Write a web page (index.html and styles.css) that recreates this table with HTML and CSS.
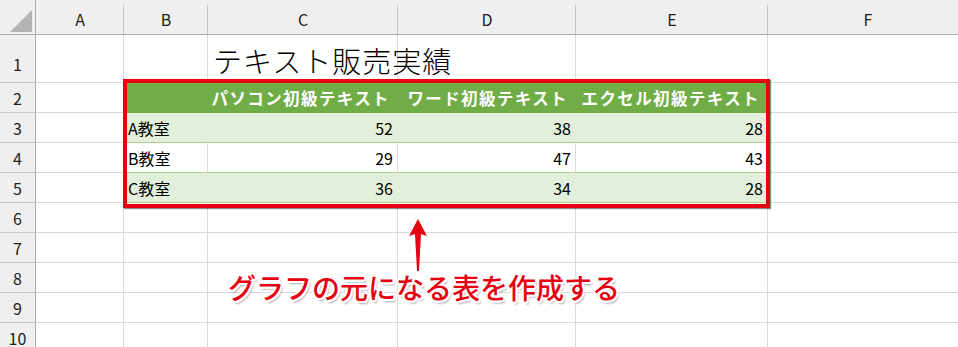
FILE: index.html
```html
<!DOCTYPE html>
<html lang="ja">
<head>
  <meta charset="UTF-8" />
  <title>テキスト販売実績</title>
  <link rel="stylesheet" href="styles.css">
</head>
<body>

<div class="sheet">
  <div class="grid">
    <!-- column headers -->
    <div class="corner"><span class="corner-mark"></span></div>
    <div class="hd">A</div>
    <div class="hd">B</div>
    <div class="hd">C</div>
    <div class="hd">D</div>
    <div class="hd">E</div>
    <div class="hd">F</div>

    <!-- row 1 : title -->
    <div class="rn rn-tall">1</div>
    <div class="cell tall"></div>
    <div class="cell tall"></div>
    <div class="cell tall title-cell"><span class="title">テキスト販売実績</span></div>
    <div class="cell tall"></div>
    <div class="cell tall"></div>
    <div class="cell tall"></div>

    <!-- row 2 : table head -->
    <div class="rn">2</div>
    <div class="cell"></div>
    <div class="cell th"></div>
    <div class="cell th">パソコン初級テキスト</div>
    <div class="cell th">ワード初級テキスト</div>
    <div class="cell th">エクセル初級テキスト</div>
    <div class="cell"></div>

    <!-- rows 3-5 : data -->
    <div class="rn">3</div>
    <div class="cell"></div>
    <div class="cell td band">A教室</div>
    <div class="cell td band num">52</div>
    <div class="cell td band num">38</div>
    <div class="cell td band num">28</div>
    <div class="cell"></div>

    <div class="rn">4</div>
    <div class="cell"></div>
    <div class="cell td">B教室</div>
    <div class="cell td num">29</div>
    <div class="cell td num">47</div>
    <div class="cell td num">43</div>
    <div class="cell"></div>

    <div class="rn">5</div>
    <div class="cell"></div>
    <div class="cell td band">C教室</div>
    <div class="cell td band num">36</div>
    <div class="cell td band num">34</div>
    <div class="cell td band num">28</div>
    <div class="cell"></div>

    <!-- empty rows -->
    <div class="rn">6</div>
    <div class="cell"></div><div class="cell"></div><div class="cell"></div><div class="cell"></div><div class="cell"></div><div class="cell"></div>
    <div class="rn">7</div>
    <div class="cell"></div><div class="cell"></div><div class="cell"></div><div class="cell"></div><div class="cell"></div><div class="cell"></div>
    <div class="rn">8</div>
    <div class="cell"></div><div class="cell"></div><div class="cell"></div><div class="cell"></div><div class="cell"></div><div class="cell"></div>
    <div class="rn">9</div>
    <div class="cell"></div><div class="cell"></div><div class="cell"></div><div class="cell"></div><div class="cell"></div><div class="cell"></div>
    <div class="rn">10</div>
    <div class="cell"></div><div class="cell"></div><div class="cell"></div><div class="cell"></div><div class="cell"></div><div class="cell"></div>
  </div>

  <!-- callout drawn over the sheet -->
  <div class="frame"></div>
  <svg class="arrow" width="24" height="56" viewBox="0 0 24 56">
    <polygon points="12,0 21,17 15,15 13,52 11,52 9,15 3,17" fill="#e60012" />
  </svg>
  <div class="note">グラフの元になる表を作成する</div>
</div>

</body>
</html>
```

FILE: styles.css
```css
body {
  margin: 0;
  background: #fff;
  font-family: "Noto Sans CJK JP", "Noto Sans", sans-serif;
  color: #000;
}
.sheet {
  position: relative;
  width: 958px;
  height: 347px;
  overflow: hidden;
}
.grid {
  display: grid;
  grid-template-columns: 36px 88px 84px 190px 178px 192px 200px;
  grid-template-rows: 35px 48px repeat(9, 30px);
}
.corner, .hd, .rn, .cell {
  box-sizing: border-box;
}
.corner {
  background: #efefef;
  border-right: 1px solid #ababab;
  border-bottom: 1px solid #ababab;
  padding: 10px 3px 2px 10px;
}
.corner-mark {
  display: block;
  width: 22px;
  height: 22px;
  background: #b4b4b4;
  clip-path: polygon(100% 0, 100% 100%, 0 100%);
}
.hd {
  background: #efefef;
  border-bottom: 1px solid #ababab;
  display: flex;
  align-items: center;
  justify-content: center;
  padding-top: 4px;
  font-size: 16px;
  color: #222;
  position: relative;
}
.hd::after {
  content: "";
  position: absolute;
  right: 0;
  top: 5px;
  bottom: 0;
  border-right: 1px solid #c6c6c6;
}
.rn {
  background: #efefef;
  border-right: 1px solid #ababab;
  border-bottom: 1px solid #c6c6c6;
  display: flex;
  align-items: center;
  justify-content: center;
  font-size: 16px;
  color: #222;
}
.rn-tall {
  padding-top: 10px;
}
.cell {
  border-right: 1px solid #dadada;
  border-bottom: 1px solid #dadada;
  display: flex;
  align-items: center;
  padding: 0 4px;
  font-size: 16px;
  white-space: nowrap;
}
.title-cell {
  overflow: visible;
  padding-left: 5px;
  padding-top: 2px;
}
.title {
  font-size: 29px;
  font-weight: 300;
  letter-spacing: 1px;
}
.th {
  background: #70ad47;
  border-right-color: #70ad47;
  border-bottom-color: #70ad47;
  color: #fff;
  font-weight: 700;
  font-size: 16.5px;
  letter-spacing: 1.4px;
  justify-content: flex-end;
  padding-right: 7px;
}
.td {
  border-bottom-color: #a9d08e;
}
.band {
  background: #e2efda;
  border-right-color: #e2efda;
}
.num {
  justify-content: flex-end;
}

/* red frame, arrow and caption */
.frame {
  position: absolute;
  left: 123px;
  top: 79px;
  width: 647px;
  height: 129px;
  box-sizing: border-box;
  border: 4px solid #e60012;
  box-shadow: 1px 1px 1px rgba(0, 0, 0, 0.45);
}
.arrow {
  position: absolute;
  left: 406px;
  top: 219px;
}
.note {
  position: absolute;
  left: 228px;
  top: 273px;
  font-size: 28px;
  font-weight: 500;
  line-height: 1;
  color: #e60012;
  white-space: nowrap;
  text-shadow:
    -2px 0 0 #fff, 2px 0 0 #fff, 0 -2px 0 #fff, 0 2px 0 #fff,
    -1.5px -1.5px 0 #fff, 1.5px -1.5px 0 #fff, -1.5px 1.5px 0 #fff, 1.5px 1.5px 0 #fff,
    2px 3px 2px rgba(0, 0, 0, 0.35);
}
```
